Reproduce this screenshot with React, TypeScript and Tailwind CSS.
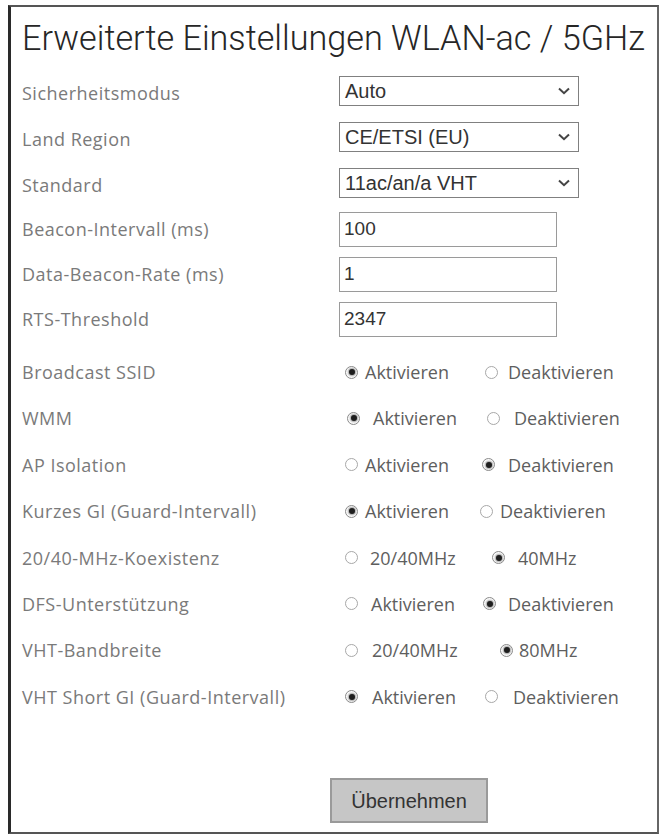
type Opt = { label: string; checked: boolean };

interface RadioRow {
  label: string;
  a: Opt;
  b: Opt;
  // spacing per row, the original form is not evenly laid out
  first: string;
  gapA: string;
  gapB: string;
}

const selects = [
  { label: 'Sicherheitsmodus', value: 'Auto' },
  { label: 'Land Region', value: 'CE/ETSI (EU)' },
  { label: 'Standard', value: '11ac/an/a VHT' },
];

const inputs = [
  { label: 'Beacon-Intervall (ms)', value: '100' },
  { label: 'Data-Beacon-Rate (ms)', value: '1' },
  { label: 'RTS-Threshold', value: '2347' },
];

const on = (label: string): Opt => ({ label, checked: true });
const off = (label: string): Opt => ({ label, checked: false });

const radios: RadioRow[] = [
  { label: 'Broadcast SSID', a: on('Aktivieren'), b: off('Deaktivieren'), first: 'w-[140px]', gapA: 'gap-[7px]', gapB: 'gap-[10px]' },
  { label: 'WMM', a: on('Aktivieren'), b: off('Deaktivieren'), first: 'w-[142px] pl-[2px]', gapA: 'gap-[13px]', gapB: 'gap-[14px]' },
  { label: 'AP Isolation', a: off('Aktivieren'), b: on('Deaktivieren'), first: 'w-[137px]', gapA: 'gap-[7px]', gapB: 'gap-[13px]' },
  { label: 'Kurzes GI (Guard-Intervall)', a: on('Aktivieren'), b: off('Deaktivieren'), first: 'w-[135px]', gapA: 'gap-[7px]', gapB: 'gap-[7px]' },
  { label: '20/40-MHz-Koexistenz', a: off('20/40MHz'), b: on('40MHz'), first: 'w-[147px]', gapA: 'gap-[12px]', gapB: 'gap-[13px]' },
  { label: 'DFS-Unterstützung', a: off('Aktivieren'), b: on('Deaktivieren'), first: 'w-[138px]', gapA: 'gap-[13px]', gapB: 'gap-[12px]' },
  { label: 'VHT-Bandbreite', a: off('20/40MHz'), b: on('80MHz'), first: 'w-[155px]', gapA: 'gap-[14px]', gapB: 'gap-[6px]' },
  { label: 'VHT Short GI (Guard-Intervall)', a: on('Aktivieren'), b: off('Deaktivieren'), first: 'w-[140px]', gapA: 'gap-[14px]', gapB: 'gap-[15px]' },
];

function Label({ children }: { children: string }) {
  return (
    <span className="w-[317px] shrink-0 pt-[5px] font-['Open_Sans',sans-serif] text-[18px] leading-[24px] tracking-[0.5px] text-[#7a7a7a]">
      {children}
    </span>
  );
}

function Chevron() {
  return (
    <svg width="12" height="8" viewBox="0 0 12 8" className="text-[#444]">
      <path d="M1 1.5 L6 6.2 L11 1.5" fill="none" stroke="currentColor" strokeWidth="2" />
    </svg>
  );
}

function Radio({ opt, gap }: { opt: Opt; gap: string }) {
  return (
    <span className={`flex items-center ${gap}`}>
      <span
        className={`flex h-[13px] w-[13px] shrink-0 items-center justify-center rounded-full border bg-white ${
          opt.checked ? 'border-[#8a8a8a]' : 'border-[#a8a8a8]'
        }`}
      >
        {opt.checked && <span className="h-[6px] w-[6px] rounded-full bg-[#1e1e1e] shadow-[0_0_2px_1px_#9a9a9a]" />}
      </span>
      <span className="font-['Open_Sans',sans-serif] text-[18px] leading-[24px] text-[#5e5e5e]">{opt.label}</span>
    </span>
  );
}

export default function App() {
  return (
    <div className="h-[834px] w-[659px] bg-white pl-[8px] pt-[5px]">
      <div className="flex h-[829px] w-[651px] flex-col border-2 border-l-[3px] border-[#555] border-l-[#2a2a2a] border-r-[#666] pl-[11px]">
        <h1 className="mt-[4px] h-[54px] whitespace-nowrap font-['Roboto',sans-serif] text-[34.2px] font-light leading-[54px] text-[#262626]">
          Erweiterte Einstellungen WLAN-ac / 5GHz
        </h1>

        <div className="mt-[5px] flex flex-col">
          {selects.map((s) => (
            <div key={s.label} className="flex h-[46px] items-start pt-[6px]">
              <Label>{s.label}</Label>
              <div className="flex h-[30px] w-[240px] items-center justify-between border border-[#808080] bg-white pl-[5px] pr-[8px] font-['Liberation_Sans',sans-serif] text-[20px] leading-[24px] text-[#333]">
                <span>{s.value}</span>
                <Chevron />
              </div>
            </div>
          ))}

          {inputs.map((s) => (
            <div key={s.label} className="flex h-[45px] items-start pt-[4px]">
              <Label>{s.label}</Label>
              <div className="flex h-[35px] w-[218px] items-center border border-[#9a9a9a] bg-white pl-[4px] font-['Liberation_Sans',sans-serif] text-[19px] text-[#333]">
                {s.value}
              </div>
            </div>
          ))}

          <div className="mt-[4px] flex flex-col">
            {radios.map((r) => (
              <div key={r.label} className="flex h-[46.4px] items-start pt-[8px]">
                <Label>{r.label}</Label>
                <div className="flex pl-[6px] pt-[5px]">
                  <span className={r.first}>
                    <Radio opt={r.a} gap={r.gapA} />
                  </span>
                  <Radio opt={r.b} gap={r.gapB} />
                </div>
              </div>
            ))}
          </div>
        </div>

        <div className="mt-[60px] pl-[308px]">
          <button className="h-[45px] w-[158px] border-2 border-[#9a9a9a] bg-[#c6c6c6] font-['Liberation_Sans',sans-serif] text-[20px] text-[#333]">
            Übernehmen
          </button>
        </div>
      </div>
    </div>
  );
}
